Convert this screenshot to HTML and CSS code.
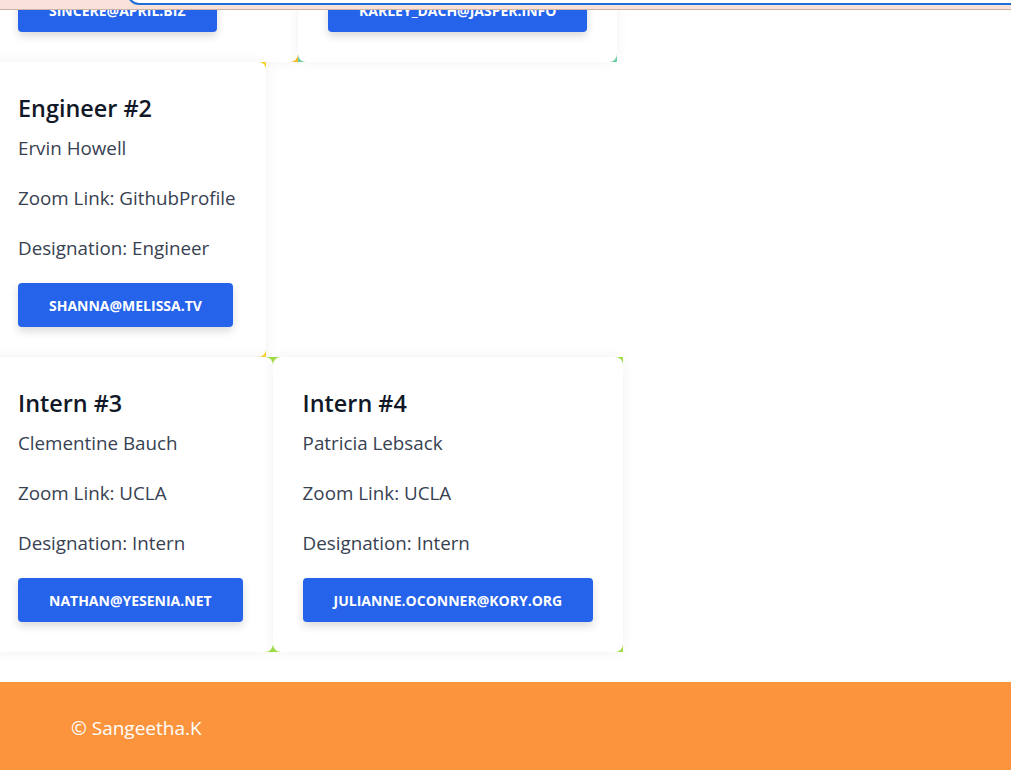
FILE: index.html
```html
<!DOCTYPE html>
<html lang="en">
<head>
<meta charset="utf-8">
<title>Team</title>
<link rel="stylesheet" href="styles.css">
</head>
<body>
<header class="topbar"><div class="search"></div></header>
<main class="team">
  <div class="row">
    <div class="frame frame-amber">
      <div class="card">
        <h2 class="card-title">Manager #1</h2>
        <p class="card-text">Leanne Graham</p>
        <p class="card-text">Zoom Link: LeanneGraham</p>
        <p class="card-text">Designation: Manager</p>
        <button class="mail-btn">Sincere@april.biz</button>
      </div>
    </div>
    <div class="frame frame-teal">
      <div class="card">
        <h2 class="card-title">Engineer #1</h2>
        <p class="card-text">Chelsey Dietrich</p>
        <p class="card-text">Zoom Link: GithubProfile</p>
        <p class="card-text">Designation: Engineer</p>
        <button class="mail-btn">Karley_Dach@jasper.info</button>
      </div>
    </div>
  </div>
  <div class="row">
    <div class="frame frame-yellow">
      <div class="card">
        <h2 class="card-title">Engineer #2</h2>
        <p class="card-text">Ervin Howell</p>
        <p class="card-text">Zoom Link: GithubProfile</p>
        <p class="card-text">Designation: Engineer</p>
        <button class="mail-btn">Shanna@melissa.tv</button>
      </div>
    </div>
  </div>
  <div class="row">
    <div class="frame frame-lime">
      <div class="card">
        <h2 class="card-title">Intern #3</h2>
        <p class="card-text">Clementine Bauch</p>
        <p class="card-text">Zoom Link: UCLA</p>
        <p class="card-text">Designation: Intern</p>
        <button class="mail-btn">Nathan@yesenia.net</button>
      </div>
    </div>
    <div class="frame frame-lime">
      <div class="card">
        <h2 class="card-title">Intern #4</h2>
        <p class="card-text">Patricia Lebsack</p>
        <p class="card-text">Zoom Link: UCLA</p>
        <p class="card-text">Designation: Intern</p>
        <button class="mail-btn">Julianne.OConner@kory.org</button>
      </div>
    </div>
  </div>
</main>
<footer class="footer">© Sangeetha.K</footer>
</body>
</html>
```
FILE: styles.css
```css
* { box-sizing: border-box; }
html, body { margin: 0; padding: 0; background: #ffffff; }
body { font-family: "Open Sans", "Noto Sans", sans-serif; color: #374151; overflow: hidden; }

.topbar {
  position: fixed;
  top: 0; left: 0; right: 0;
  height: 10px;
  background: #f7e1d9;
  border-bottom: 1px solid #cdb2a8;
  overflow: hidden;
  z-index: 10;
}
.search {
  margin-left: 127px;
  margin-top: -30px;
  height: 35px;
  width: 1000px;
  background: #ffffff;
  border: 2px solid #1f6fd8;
  border-radius: 12px;
}

.team {
  margin-top: -233px;
  margin-left: -12px;
  padding-bottom: 30px;
}
.row { display: flex; align-items: flex-start; }

.frame-amber { background: #fbbf24; }
.frame-teal { background: #6ed3a6; }
.frame-yellow { background: #fcd934; }
.frame-lime { background: #a3e048; }

.card {
  background: #ffffff;
  border-radius: 8px;
  padding: 30px;
  box-shadow: 0 0 14px rgba(0, 0, 0, 0.06);
}
.frame-amber .card { min-width: 310px; }

.card-title {
  margin: 0 0 10px;
  font-size: 23.4px;
  line-height: 32px;
  font-weight: 600;
  color: #111827;
}
.card-text {
  margin: 0 0 22px;
  font-size: 18.8px;
  line-height: 28px;
  color: #374151;
  white-space: nowrap;
}
.card-text:nth-of-type(3) { margin-bottom: 21px; }

.mail-btn {
  display: block;
  height: 44px;
  padding: 0 31px;
  border: 0;
  border-radius: 4px;
  background: #2563eb;
  color: #ffffff;
  font-family: "Open Sans", "Noto Sans", sans-serif;
  font-size: 14px;
  font-weight: 700;
  text-transform: uppercase;
  box-shadow: 0 4px 8px rgba(0, 0, 0, 0.15);
  white-space: nowrap;
}

.footer {
  background: #fb943c;
  color: #ffffff;
  height: 100px;
  padding: 32px 71px 0;
  font-size: 19px;
  line-height: 28px;
}
```
